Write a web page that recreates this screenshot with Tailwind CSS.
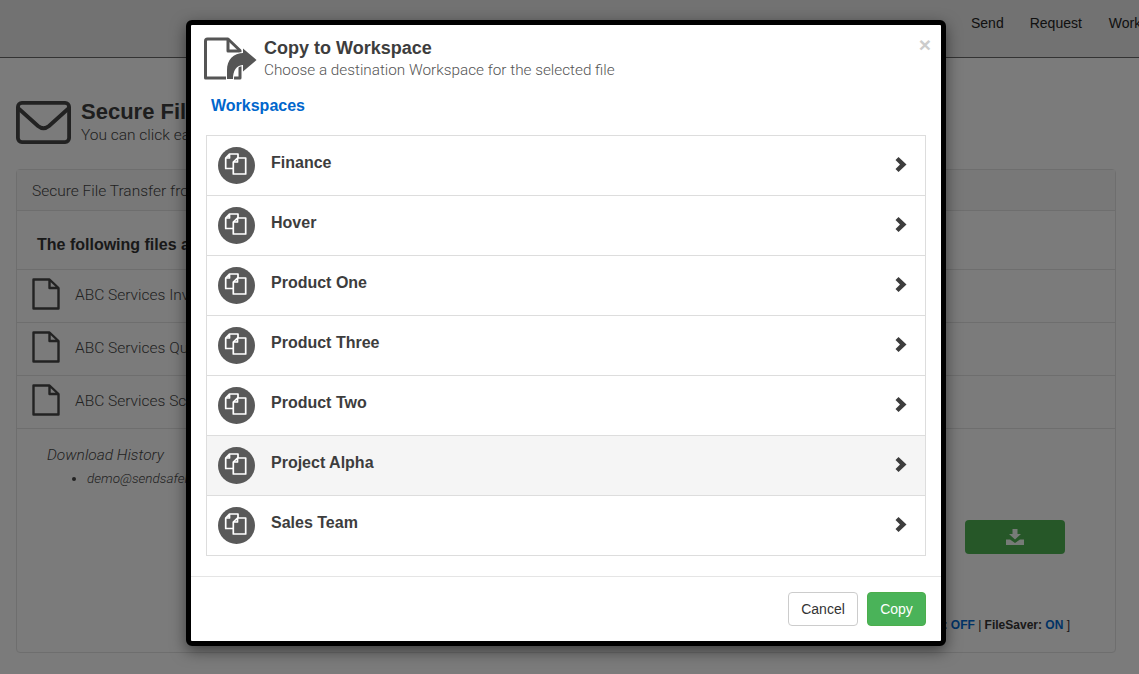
<!DOCTYPE html>
<html lang="en">
<head>
    <meta charset="UTF-8">
    <meta name="viewport" content="width=device-width, initial-scale=1.0">
    <title>Copy to Workspace</title>
    <script src="https://cdn.jsdelivr.net/npm/@tailwindcss/browser@4"></script>
</head>
<body class="relative h-[674px] overflow-hidden bg-[#f6f6f6] font-['Liberation_Sans',sans-serif] text-[#333]">
    <!-- page behind the dialog -->
    <header class="flex h-[58px] gap-[26px] overflow-hidden border-b border-[#666] bg-[#e4e4e4] pt-[13px] pl-[971px] text-sm text-[#222]">
        <span>Send</span>
        <span>Request</span>
        <span class="ml-px whitespace-nowrap">Workspaces</span>
    </header>

    <main class="px-4 pr-[23px]">
        <div class="flex h-[111px] gap-[10px] pt-[42px]">
            <svg class="mt-[1px]" width="55" height="43" viewBox="0 0 55 43" fill="none" stroke="#444" stroke-width="3.800" stroke-linejoin="round">
                <rect x="1.900" y="1.900" width="51.200" height="39.200" rx="4"/>
                <path d="M2 7 L22 25 Q27.500 29.500 33 25 L53 7"/>
            </svg>
            <div>
                <h1 class="-mt-px text-[22px] leading-[26px] font-bold whitespace-nowrap text-[#3d3d3d]">Secure File Transfer</h1>
                <p class="pt-px font-['Roboto',sans-serif] text-[15.5px] leading-[19px] font-light whitespace-nowrap text-[#444]">You can click each file</p>
            </div>
        </div>

        <section class="h-[484px] rounded border border-[#ddd]">
            <div class="h-[41px] border-b border-[#ddd] bg-[#f1f1f1] pt-[11px] pl-[15px] font-['Roboto',sans-serif] text-[15.5px] leading-[20px] font-light text-[#444]">Secure File Transfer from</div>
            <div class="h-[59px] border-b border-[#ddd] pt-[24px] pl-5 text-base leading-[20px] font-bold">The following files are available</div>
            <div class="flex h-[53px] items-center gap-[15px] border-b border-[#ddd] pl-[15px] font-['Roboto',sans-serif] text-[15.5px] font-light text-[#444]">
                <svg class="mb-[5px]" width="28" height="32" viewBox="0 0 28 32" fill="none" stroke="#444" stroke-width="2.400" stroke-linejoin="round"><path d="M1.500 1.500 H17.500 L26.500 10 V30.500 H1.500 Z M17.500 1.500 V10 H26.500"/></svg>
                <span class="mb-[1px]">ABC Services Invoice</span>
            </div>
            <div class="flex h-[53px] items-center gap-[15px] border-b border-[#ddd] pl-[15px] font-['Roboto',sans-serif] text-[15.5px] font-light text-[#444]">
                <svg class="mb-[5px]" width="28" height="32" viewBox="0 0 28 32" fill="none" stroke="#444" stroke-width="2.400" stroke-linejoin="round"><path d="M1.500 1.500 H17.500 L26.500 10 V30.500 H1.500 Z M17.500 1.500 V10 H26.500"/></svg>
                <span class="mb-[1px]">ABC Services Quote</span>
            </div>
            <div class="flex h-[53px] items-center gap-[15px] border-b border-[#ddd] pl-[15px] font-['Roboto',sans-serif] text-[15.5px] font-light text-[#444]">
                <svg class="mb-[5px]" width="28" height="32" viewBox="0 0 28 32" fill="none" stroke="#444" stroke-width="2.400" stroke-linejoin="round"><path d="M1.500 1.500 H17.500 L26.500 10 V30.500 H1.500 Z M17.500 1.500 V10 H26.500"/></svg>
                <span class="mb-[1px]">ABC Services Schedule</span>
            </div>
            <div class="pt-[16px] pl-[30px] font-['Roboto',sans-serif] font-light text-[#444] italic">
                <p class="text-[15.500px] leading-[20px]">Download History</p>
                <ul class="mt-[4px] list-disc pl-[40px] text-[13.500px] leading-[18px]">
                    <li>demo@sendsafely.com</li>
                </ul>
            </div>
            <div class="mt-[33px] flex justify-end pr-[50px]">
                <button class="flex h-[34px] w-[100px] items-center justify-center rounded bg-[#4cae50]">
                    <svg width="18" height="16" viewBox="0 0 18 16" fill="#fff" fill-opacity="0.9">
                        <path d="M6.500 0 H11.500 V5 H15 L9 10.500 L3 5 H6.500 Z"/>
                        <path d="M0 10.500 H4 L9 14 L14 10.500 H18 V16 H0 Z"/>
                    </svg>
                </button>
            </div>
            <p class="mt-[63px] pr-[45px] text-right text-xs leading-[16px] font-bold">
                [ Compression: <span class="text-[#06c]">OFF</span> <span class="font-normal">|</span> FileSaver: <span class="text-[#06c]">ON</span> <span class="font-normal">]</span>
            </p>
        </section>
    </main>

    <!-- dialog -->
    <div class="absolute inset-0 bg-black/50">
        <div class="mt-5 ml-[186px] w-[760px] rounded-md border-[5px] border-black bg-white text-[#3d3d3d] shadow-[0_5px_15px_rgba(0,0,0,0.5)]">
            <div class="relative flex h-[60px] gap-[7px] pt-[12px] pl-[13px]">
                <svg class="shrink-0" width="53" height="43" viewBox="0 0 53 43" fill="none">
                    <path d="M3.500 2 H24 L36 13.500 V41 H1.500 V4 Q1.500 2 3.500 2 Z" stroke="#555" stroke-width="3" stroke-linejoin="round"/>
                    <path d="M24 2.500 V14 H36" stroke="#555" stroke-width="3" stroke-linejoin="round"/>
                    <path d="M40 16 C29 16 23 23 23 33 V42 H29 C29 34 32 28 40 28 Z" fill="#555" stroke="#fff" stroke-width="2" paint-order="stroke"/>
                    <path d="M39 11.500 L52.500 23 L39 34.500 Z" fill="#555" stroke="#fff" stroke-width="2" paint-order="stroke"/>
                    <path d="M38 16 H41 V28 H38 Z" fill="#555"/>
                </svg>
                <div>
                    <h2 class="text-lg leading-[22px] font-bold">Copy to Workspace</h2>
                    <p class="font-['Roboto',sans-serif] text-[15.300px] leading-[22px] font-light text-[#555]">Choose a destination Workspace for the selected file</p>
                </div>
                <span class="absolute top-[8px] right-[10px] text-[21px] leading-[24px] font-bold text-[#ccc]">×</span>
            </div>

            <h3 class="h-[50px] pt-[11px] pl-5 text-base leading-[20px] font-bold text-[#06c]">Workspaces</h3>

            <ul class="mx-[15px] border-t border-[#ddd]">
                <li class="flex h-[60px] items-center border-x border-b border-[#ddd] pr-[18px] pl-[11px]">
                    <svg width="37" height="37" viewBox="0 0 37 37"><circle cx="18.500" cy="18.500" r="18.500" fill="#595959"/><path d="M11.500 7 H20 V21.500 H7.700 V11 Z M11.500 7 V11 H7.700" fill="none" stroke="#fff" stroke-width="1.700" stroke-linejoin="round"/><path d="M19.500 11 H27.700 V27 H15.300 V15 Z M19.500 11 V15 H15.300" fill="#595959" stroke="#fff" stroke-width="1.700" stroke-linejoin="round"/></svg>
                    <span class="mb-[6px] ml-4 flex-1 text-base font-bold">Finance</span>
                    <svg class="mb-[2px]" width="12" height="15" viewBox="0 0 12 15" fill="#3d3d3d"><path d="M0.500 3 L3.500 0 L11.500 7.500 L3.500 15 L0.500 12 L5 7.500 Z"/></svg>
                </li>
                <li class="flex h-[60px] items-center border-x border-b border-[#ddd] pr-[18px] pl-[11px]">
                    <svg width="37" height="37" viewBox="0 0 37 37"><circle cx="18.500" cy="18.500" r="18.500" fill="#595959"/><path d="M11.500 7 H20 V21.500 H7.700 V11 Z M11.500 7 V11 H7.700" fill="none" stroke="#fff" stroke-width="1.700" stroke-linejoin="round"/><path d="M19.500 11 H27.700 V27 H15.300 V15 Z M19.500 11 V15 H15.300" fill="#595959" stroke="#fff" stroke-width="1.700" stroke-linejoin="round"/></svg>
                    <span class="mb-[6px] ml-4 flex-1 text-base font-bold">Hover</span>
                    <svg class="mb-[2px]" width="12" height="15" viewBox="0 0 12 15" fill="#3d3d3d"><path d="M0.500 3 L3.500 0 L11.500 7.500 L3.500 15 L0.500 12 L5 7.500 Z"/></svg>
                </li>
                <li class="flex h-[60px] items-center border-x border-b border-[#ddd] pr-[18px] pl-[11px]">
                    <svg width="37" height="37" viewBox="0 0 37 37"><circle cx="18.500" cy="18.500" r="18.500" fill="#595959"/><path d="M11.500 7 H20 V21.500 H7.700 V11 Z M11.500 7 V11 H7.700" fill="none" stroke="#fff" stroke-width="1.700" stroke-linejoin="round"/><path d="M19.500 11 H27.700 V27 H15.300 V15 Z M19.500 11 V15 H15.300" fill="#595959" stroke="#fff" stroke-width="1.700" stroke-linejoin="round"/></svg>
                    <span class="mb-[6px] ml-4 flex-1 text-base font-bold">Product One</span>
                    <svg class="mb-[2px]" width="12" height="15" viewBox="0 0 12 15" fill="#3d3d3d"><path d="M0.500 3 L3.500 0 L11.500 7.500 L3.500 15 L0.500 12 L5 7.500 Z"/></svg>
                </li>
                <li class="flex h-[60px] items-center border-x border-b border-[#ddd] pr-[18px] pl-[11px]">
                    <svg width="37" height="37" viewBox="0 0 37 37"><circle cx="18.500" cy="18.500" r="18.500" fill="#595959"/><path d="M11.500 7 H20 V21.500 H7.700 V11 Z M11.500 7 V11 H7.700" fill="none" stroke="#fff" stroke-width="1.700" stroke-linejoin="round"/><path d="M19.500 11 H27.700 V27 H15.300 V15 Z M19.500 11 V15 H15.300" fill="#595959" stroke="#fff" stroke-width="1.700" stroke-linejoin="round"/></svg>
                    <span class="mb-[6px] ml-4 flex-1 text-base font-bold">Product Three</span>
                    <svg class="mb-[2px]" width="12" height="15" viewBox="0 0 12 15" fill="#3d3d3d"><path d="M0.500 3 L3.500 0 L11.500 7.500 L3.500 15 L0.500 12 L5 7.500 Z"/></svg>
                </li>
                <li class="flex h-[60px] items-center border-x border-b border-[#ddd] pr-[18px] pl-[11px]">
                    <svg width="37" height="37" viewBox="0 0 37 37"><circle cx="18.500" cy="18.500" r="18.500" fill="#595959"/><path d="M11.500 7 H20 V21.500 H7.700 V11 Z M11.500 7 V11 H7.700" fill="none" stroke="#fff" stroke-width="1.700" stroke-linejoin="round"/><path d="M19.500 11 H27.700 V27 H15.300 V15 Z M19.500 11 V15 H15.300" fill="#595959" stroke="#fff" stroke-width="1.700" stroke-linejoin="round"/></svg>
                    <span class="mb-[6px] ml-4 flex-1 text-base font-bold">Product Two</span>
                    <svg class="mb-[2px]" width="12" height="15" viewBox="0 0 12 15" fill="#3d3d3d"><path d="M0.500 3 L3.500 0 L11.500 7.500 L3.500 15 L0.500 12 L5 7.500 Z"/></svg>
                </li>
                <li class="flex h-[60px] items-center border-x border-b border-[#ddd] bg-[#f5f5f5] pr-[18px] pl-[11px]">
                    <svg width="37" height="37" viewBox="0 0 37 37"><circle cx="18.500" cy="18.500" r="18.500" fill="#595959"/><path d="M11.500 7 H20 V21.500 H7.700 V11 Z M11.500 7 V11 H7.700" fill="none" stroke="#fff" stroke-width="1.700" stroke-linejoin="round"/><path d="M19.500 11 H27.700 V27 H15.300 V15 Z M19.500 11 V15 H15.300" fill="#595959" stroke="#fff" stroke-width="1.700" stroke-linejoin="round"/></svg>
                    <span class="mb-[6px] ml-4 flex-1 text-base font-bold">Project Alpha</span>
                    <svg class="mb-[2px]" width="12" height="15" viewBox="0 0 12 15" fill="#3d3d3d"><path d="M0.500 3 L3.500 0 L11.500 7.500 L3.500 15 L0.500 12 L5 7.500 Z"/></svg>
                </li>
                <li class="flex h-[60px] items-center border-x border-b border-[#ddd] pr-[18px] pl-[11px]">
                    <svg width="37" height="37" viewBox="0 0 37 37"><circle cx="18.500" cy="18.500" r="18.500" fill="#595959"/><path d="M11.500 7 H20 V21.500 H7.700 V11 Z M11.500 7 V11 H7.700" fill="none" stroke="#fff" stroke-width="1.700" stroke-linejoin="round"/><path d="M19.500 11 H27.700 V27 H15.300 V15 Z M19.500 11 V15 H15.300" fill="#595959" stroke="#fff" stroke-width="1.700" stroke-linejoin="round"/></svg>
                    <span class="mb-[6px] ml-4 flex-1 text-base font-bold">Sales Team</span>
                    <svg class="mb-[2px]" width="12" height="15" viewBox="0 0 12 15" fill="#3d3d3d"><path d="M0.500 3 L3.500 0 L11.500 7.500 L3.500 15 L0.500 12 L5 7.500 Z"/></svg>
                </li>
            </ul>

            <div class="mt-5 flex h-[65px] justify-end gap-[9px] border-t border-[#e5e5e5] pt-[15px] pr-[15px]">
                <button class="h-[34px] w-[70px] rounded border border-[#ccc] bg-white text-sm text-[#333]">Cancel</button>
                <button class="h-[34px] w-[59px] rounded border border-[#4cae4c] bg-[#4ab359] text-sm text-white">Copy</button>
            </div>
        </div>
    </div>
</body>
</html>
